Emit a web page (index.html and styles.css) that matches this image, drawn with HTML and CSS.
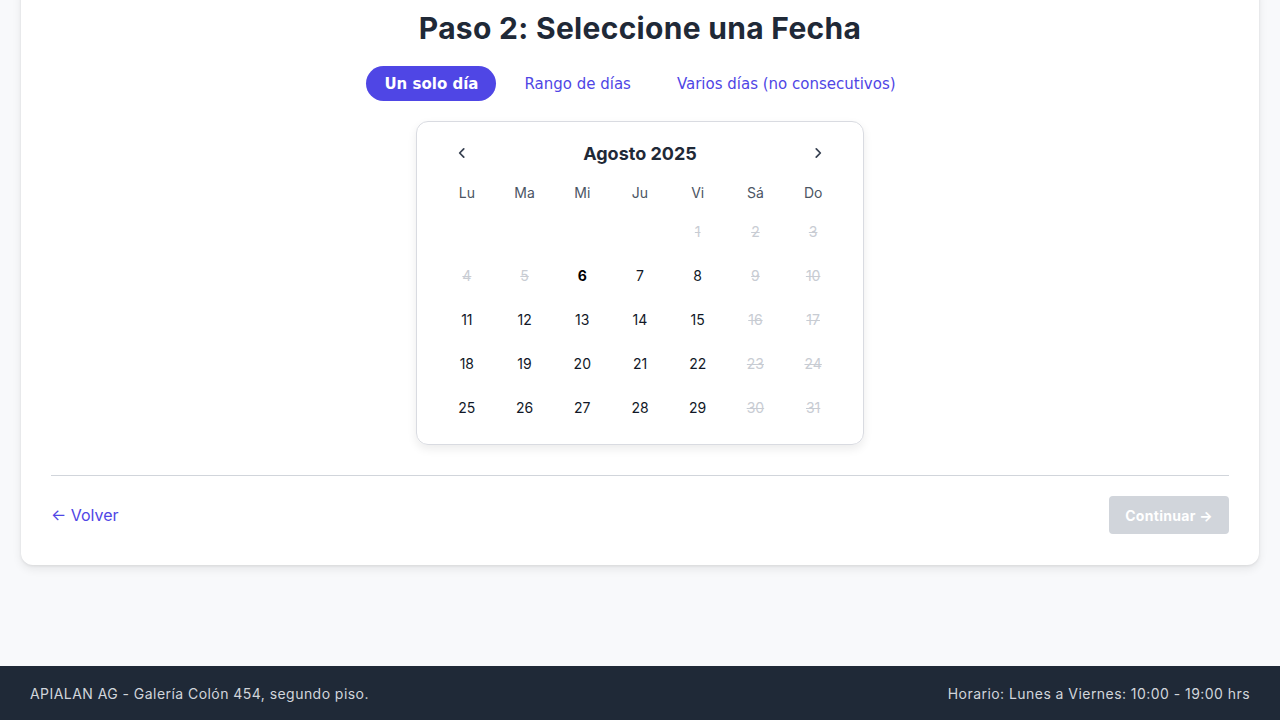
FILE: index.html
```html
<!DOCTYPE html>
<html lang="es">
<head>
<meta charset="utf-8">
<title>Paso 2: Seleccione una Fecha</title>
<link rel="stylesheet" href="styles.css">
</head>
<body>
<main class="main">
  <section class="card">
    <h1 class="title">Paso 2: Seleccione una Fecha</h1>
    <div class="tabs">
      <button class="tab tab-active">Un solo día</button>
      <button class="tab">Rango de días</button>
      <button class="tab">Varios días (no consecutivos)</button>
    </div>
    <div class="calendar">
      <div class="cal-header">
        <button class="nav-btn" aria-label="Mes anterior">
          <svg width="14" height="14" viewBox="0 0 24 24" fill="none" stroke="currentColor" stroke-width="3" stroke-linecap="round" stroke-linejoin="round"><path d="M15 5l-7 7 7 7"/></svg>
        </button>
        <div class="cal-title">Agosto 2025</div>
        <button class="nav-btn" aria-label="Mes siguiente">
          <svg width="14" height="14" viewBox="0 0 24 24" fill="none" stroke="currentColor" stroke-width="3" stroke-linecap="round" stroke-linejoin="round"><path d="M9 5l7 7-7 7"/></svg>
        </button>
      </div>
      <div class="weekdays">
        <span>Lu</span><span>Ma</span><span>Mi</span><span>Ju</span><span>Vi</span><span>Sá</span><span>Do</span>
      </div>
      <div class="days">
        <span class="day empty"></span><span class="day empty"></span><span class="day empty"></span><span class="day empty"></span>
        <span class="day off">1</span><span class="day off">2</span><span class="day off">3</span>
        <span class="day off">4</span><span class="day off">5</span><span class="day today">6</span><span class="day">7</span><span class="day">8</span><span class="day off">9</span><span class="day off">10</span>
        <span class="day">11</span><span class="day">12</span><span class="day">13</span><span class="day">14</span><span class="day">15</span><span class="day off">16</span><span class="day off">17</span>
        <span class="day">18</span><span class="day">19</span><span class="day">20</span><span class="day">21</span><span class="day">22</span><span class="day off">23</span><span class="day off">24</span>
        <span class="day">25</span><span class="day">26</span><span class="day">27</span><span class="day">28</span><span class="day">29</span><span class="day off">30</span><span class="day off">31</span>
      </div>
    </div>
    <div class="actions">
      <a class="back" href="#">← Volver</a>
      <button class="continue" disabled>Continuar →</button>
    </div>
  </section>
</main>
<footer class="footer">
  <span>APIALAN AG - Galería Colón 454, segundo piso.</span>
  <span>Horario: Lunes a Viernes: 10:00 - 19:00 hrs</span>
</footer>
</body>
</html>
```

FILE: styles.css
```css
* { box-sizing: border-box; }
html, body { margin: 0; padding: 0; }
body {
  min-height: 100vh;
  display: flex;
  flex-direction: column;
  background: #f8f9fb;
  font-family: Inter, "Noto Sans", sans-serif;
  color: #1f2937;
}
.main {
  flex: 1;
  padding: 0 21px;
}
.card {
  margin-top: -20px;
  background: #fff;
  border-radius: 12px;
  box-shadow: 0 4px 10px rgba(0,0,0,0.08), 0 1px 3px rgba(0,0,0,0.08);
  padding: 30px 30px 31px;
}
.title {
  margin: 0;
  text-align: center;
  font-size: 30px;
  line-height: 36px;
  font-weight: 700;
  letter-spacing: 0.3px;
  color: #1f2937;
}
.tabs {
  display: flex;
  justify-content: center;
  gap: 10px;
  margin-top: 20px;
}
.tab {
  font-family: "DejaVu Sans", sans-serif;
  font-size: 15px;
  height: 35px;
  padding: 0 18px;
  border: none;
  border-radius: 18px;
  background: transparent;
  color: #4f46e5;
  cursor: pointer;
}
.tab-active {
  background: #4f46e5;
  color: #fff;
  font-weight: 700;
}
.calendar {
  width: 448px;
  margin: 20px auto 0;
  border: 1px solid #d9dbe1;
  border-radius: 12px;
  box-shadow: 0 4px 10px rgba(0,0,0,0.08);
  padding: 16px 21px 15px;
}
.cal-header {
  display: flex;
  align-items: center;
  justify-content: space-between;
  height: 30px;
}
.nav-btn {
  width: 32px;
  height: 32px;
  margin: 0 8px;
  border: none;
  background: transparent;
  color: #374151;
  display: flex;
  align-items: center;
  justify-content: center;
  padding: 0;
}
.cal-title {
  font-size: 18px;
  font-weight: 700;
  color: #1f2937;
}
.weekdays {
  display: grid;
  grid-template-columns: repeat(7, 1fr);
  margin-top: 14px;
  height: 20px;
  align-items: center;
  text-align: center;
  font-size: 14px;
  color: #4b5563;
}
.days {
  display: grid;
  grid-template-columns: repeat(7, 1fr);
  grid-template-rows: 43px repeat(4, 44px);
  margin-top: 8px;
}
.day {
  display: flex;
  align-items: center;
  justify-content: center;
  font-size: 14px;
  color: #111827;
}
.day.off {
  color: #c8ccd3;
  text-decoration: line-through;
}
.day.today {
  font-weight: 700;
  color: #000;
}
.actions {
  margin-top: 30px;
  border-top: 1px solid #d1d5db;
  padding-top: 20px;
  display: flex;
  justify-content: space-between;
  align-items: center;
}
.back {
  color: #4f46e5;
  text-decoration: none;
  font-size: 16px;
}
.continue {
  font-family: inherit;
  height: 38px;
  padding: 0 16px;
  border: none;
  border-radius: 4px;
  background: #d1d5db;
  color: #fff;
  font-size: 14px;
  font-weight: 700;
  letter-spacing: 0.3px;
}
.footer {
  height: 54px;
  background: #1f2937;
  color: #d1d5db;
  display: flex;
  align-items: center;
  justify-content: space-between;
  padding: 0 30px;
  font-size: 14px;
  letter-spacing: 0.45px;
}
```
